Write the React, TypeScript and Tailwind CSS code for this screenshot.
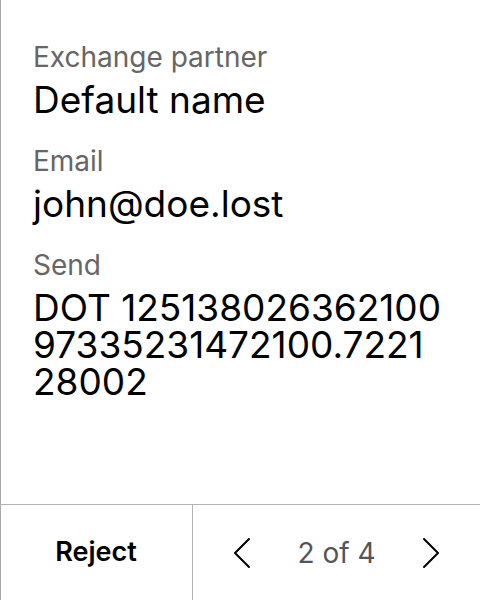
import React from 'react';

const fields = [
  { label: 'Exchange partner', value: 'Default name' },
  { label: 'Email', value: 'john@doe.lost' },
  { label: 'Send', value: 'DOT 12513802636210097335231472100.722128002' },
];

const Chevron = ({ dir }: { dir: 'left' | 'right' }) => (
  <svg width="18" height="32" viewBox="0 0 18 32" fill="none" stroke="#000" strokeWidth="2" strokeLinecap="round" strokeLinejoin="round">
    {dir === 'left' ? <path d="M16 2 L2 16 L16 30" /> : <path d="M2 2 L16 16 L2 30" />}
  </svg>
);

const App = () => {
  return (
    <div className="h-[600px] w-[480px] flex flex-col bg-white border-l border-[#ababab] font-['Inter',sans-serif]">
      <div className="flex-1 flex flex-col gap-[27px] px-8 pt-[41px]">
        {fields.map((f) => (
          <div key={f.label} className="flex flex-col gap-2">
            <div className="text-[28px] leading-8 text-[#666666]">{f.label}</div>
            <div className="max-w-[411px] text-[37px] leading-[37px] text-black break-all">{f.value}</div>
          </div>
        ))}
      </div>
      <div className="h-24 flex border-t border-[#b3b3b3] -ml-px">
        <button className="w-[193px] flex items-center justify-center border-r border-[#b3b3b3] text-[27px] font-semibold text-black">
          Reject
        </button>
        <div className="flex-1 flex items-center justify-center gap-[46px]">
          <Chevron dir="left" />
          <span className="text-[28px] text-[#555555]">2 of 4</span>
          <Chevron dir="right" />
        </div>
      </div>
    </div>
  );
};

export default App;
